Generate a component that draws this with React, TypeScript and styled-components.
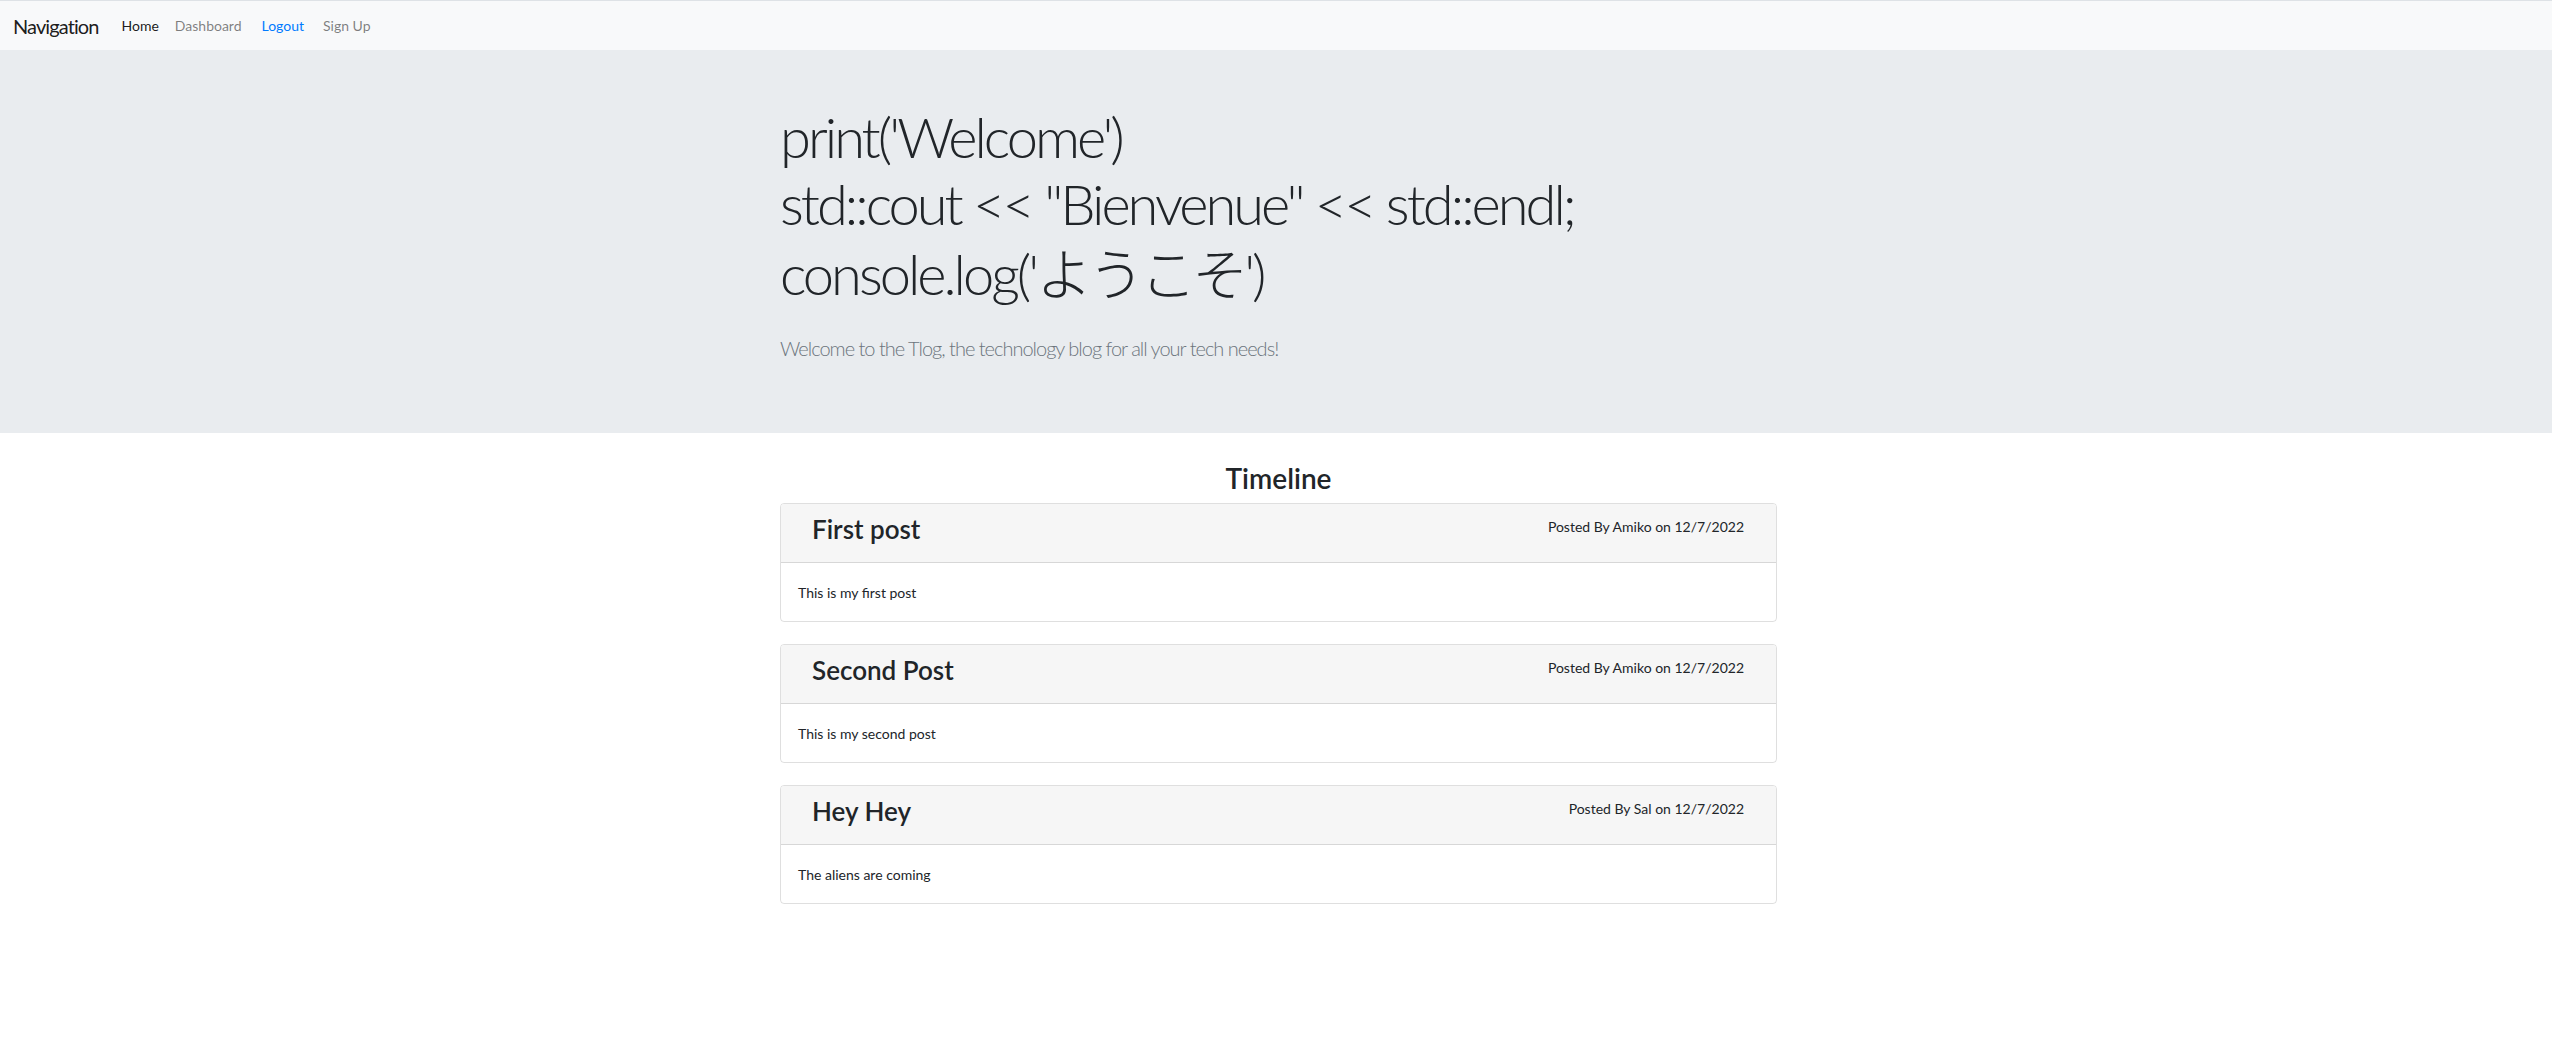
import React from 'react'
import styled, { createGlobalStyle } from 'styled-components'

const GlobalStyle = createGlobalStyle`
  * {
    box-sizing: border-box;
  }
  body {
    margin: 0;
    background: #fff;
    color: #212529;
    font-family: Lato, "Open Sans", "Noto Sans CJK JP", sans-serif;
    font-size: 14px;
  }
`

const posts = [
  { id: 1, title: 'First post', author: 'Amiko', date: '12/7/2022', body: 'This is my first post' },
  { id: 2, title: 'Second Post', author: 'Amiko', date: '12/7/2022', body: 'This is my second post' },
  { id: 3, title: 'Hey Hey', author: 'Sal', date: '12/7/2022', body: 'The aliens are coming' },
]

const NavBar = styled.nav`
  display: flex;
  align-items: center;
  height: 50px;
  padding: 0 13px;
  background: #f8f9fa;
  border-top: 1px solid #dee2e6;
`

const Brand = styled.a`
  font-size: 20px;
  line-height: 30px;
  letter-spacing: -0.9px;
  color: rgba(0, 0, 0, 0.9);
  margin-right: 15px;
  text-decoration: none;
`

const NavLinks = styled.div`
  display: flex;
  align-items: center;
`

const NavLink = styled.a<{ $tone?: 'active' | 'muted' | 'primary' }>`
  font-size: 14px;
  line-height: 21px;
  padding: 0 8px;
  text-decoration: none;
  color: ${({ $tone }) =>
    $tone === 'active' ? 'rgba(0, 0, 0, 0.9)' : $tone === 'primary' ? '#007bff' : 'rgba(0, 0, 0, 0.5)'};
`

const UserLinks = styled.div`
  display: flex;
  gap: 3px;
  margin-left: 4px;
`

const Jumbotron = styled.header`
  background: #e9ecef;
  padding: 53px 0 70px;
`

const Container = styled.div`
  width: 1002px;
  margin: 0 auto;
  padding-left: 5px;
`

const Display = styled.h1`
  margin: 0 0 25px;
  font-size: 56px;
  font-weight: 300;
  line-height: 1.2;
  letter-spacing: -3px;
  color: #212529;
`

const Kana = styled.span`
  font-family: "Noto Sans CJK JP", sans-serif;
  font-weight: 300;
  letter-spacing: -4px;
`

const Lead = styled.p`
  margin: 0;
  font-size: 20px;
  line-height: 30px;
  font-weight: 300;
  letter-spacing: -1px;
  color: #6c757d;
`

const Main = styled.main`
  padding-top: 29px;
`

const Heading = styled.h3`
  margin: 0 0 8px;
  text-align: center;
  font-size: 28px;
  font-weight: 600;
  line-height: 1.2;
`

const Card = styled.article`
  border: 1px solid rgba(0, 0, 0, 0.125);
  border-radius: 4px;
  margin-bottom: 22px;
  overflow: hidden;
`

const CardHeader = styled.div`
  display: flex;
  justify-content: space-between;
  align-items: flex-start;
  height: 59px;
  padding: 10px 32px 0 31px;
  background: #f6f6f6;
  border-bottom: 1px solid rgba(0, 0, 0, 0.125);
`

const Title = styled.h3`
  margin: 0;
  font-size: 26px;
  font-weight: 600;
  line-height: 1.2;
`

const Meta = styled.p`
  margin: 2px 0 0;
  font-size: 14px;
  line-height: 21px;
`

const CardBody = styled.div`
  padding: 19px 17px 18px;
  font-size: 14px;
  line-height: 21px;
`

export default function App() {
  return (
    <>
      <GlobalStyle />
      <NavBar>
        <Brand href="#">Navigation</Brand>
        <NavLinks>
          <NavLink $tone="active" href="#">Home</NavLink>
          <NavLink href="#">Dashboard</NavLink>
          <UserLinks>
            <NavLink $tone="primary" href="#">Logout</NavLink>
            <NavLink href="#">Sign Up</NavLink>
          </UserLinks>
        </NavLinks>
      </NavBar>
      <Jumbotron>
        <Container>
          <Display>
            print('Welcome')
            <br />
            std::cout &lt;&lt; "Bienvenue" &lt;&lt; std::endl;
            <br />
            console.log('<Kana>ようこそ</Kana>')
          </Display>
          <Lead>Welcome to the Tlog, the technology blog for all your tech needs!</Lead>
        </Container>
      </Jumbotron>
      <Main>
        <Container>
          <Heading>Timeline</Heading>
          {posts.map((post) => (
            <Card key={post.id}>
              <CardHeader>
                <Title>{post.title}</Title>
                <Meta>
                  Posted By {post.author} on {post.date}
                </Meta>
              </CardHeader>
              <CardBody>{post.body}</CardBody>
            </Card>
          ))}
        </Container>
      </Main>
    </>
  )
}
